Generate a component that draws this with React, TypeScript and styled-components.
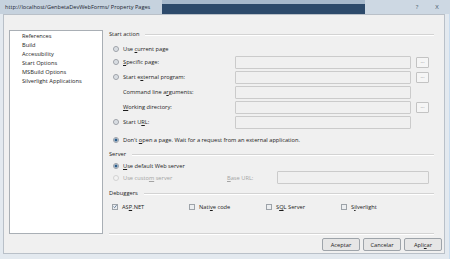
import React from "react";
import styled, { createGlobalStyle } from "styled-components";

const Global = createGlobalStyle`
  html, body { margin: 0; padding: 0; background: #ffffff; }
  body { font-family: "Open Sans", "Liberation Sans", sans-serif; }
  * { box-sizing: border-box; }
`;

const Window = styled.div`
  width: 450px;
  height: 259px;
  display: flex;
  flex-direction: column;
  background: #ffffff;
  overflow: hidden;
  font-family: "Open Sans", "Liberation Sans", sans-serif;
  font-size: 5.7px;
  color: #1c1c1c;
`;

const TitleBar = styled.div`
  height: 14px;
  flex: none;
  display: flex;
  background-color: #c9d4df;
`;

const TitleGlass = styled.div`
  width: 162px;
  flex: none;
  display: flex;
  align-items: center;
  padding: 0 0 1px 5px;
  background-color: #c6d2de;
`;

const TitleDark = styled.div`
  flex: 1;
  background-color: #2d4a6b;
  border-top: 4px solid #a7b9cc;
`;

const TitleCaptions = styled.div`
  width: 85px;
  flex: none;
  display: flex;
  align-items: center;
  justify-content: flex-end;
  padding: 0 6px 1px 0;
  background-color: #cdd8e3;
`;

const TitleText = styled.span`
  font-size: 5.6px;
  color: #1b2633;
  white-space: nowrap;
`;

const CaptionButton = styled.span`
  width: 14px;
  height: 9px;
  display: flex;
  align-items: center;
  justify-content: center;
  font-size: 6px;
  color: #46586b;
  margin-left: 6px;
`;

const Frame = styled.div`
  flex: 1;
  display: flex;
  padding: 0 4px 5px 3px;
  background: #e3e9ef;
  border-right: 1px solid #c9dcee;
`;

const Client = styled.div`
  flex: 1;
  display: flex;
  flex-direction: column;
  background: #f0f0f0;
  border: 1px solid #b9c0c8;
  padding: 15px 2px 2px 5px;
`;

const Body = styled.div`
  display: flex;
  height: 204px;
  margin-right: 8px;
`;

const ListBox = styled.div`
  width: 94px;
  flex: none;
  background: #ffffff;
  border: 1px solid #a9afb5;
  padding: 1px 0 0 12px;
  margin-right: 6px;
  display: flex;
  flex-direction: column;
`;

const ListItem = styled.div`
  height: 9.1px;
  line-height: 9.1px;
  white-space: nowrap;
  color: #1c1c1c;
`;

const Panel = styled.div`
  flex: 1;
  display: flex;
  flex-direction: column;
  border-bottom: 1px solid #d3d3d3;
  box-shadow: 0 1px 0 #ffffff;
`;

const GroupHeader = styled.div<{ $mt?: number }>`
  height: 8px;
  display: flex;
  align-items: center;
  margin-top: ${(p) => p.$mt ?? 0}px;
  &::after {
    content: "";
    flex: 1;
    height: 1px;
    margin-left: 6px;
    background: #d3d3d3;
    box-shadow: 0 1px 0 #ffffff;
  }
`;

const Row = styled.div<{ $h?: number; $mt?: number }>`
  display: flex;
  align-items: center;
  height: ${(p) => p.$h ?? 9}px;
  margin-top: ${(p) => p.$mt ?? 0}px;
`;

const OptionLabel = styled.div<{ $w?: number; $indent?: number; $disabled?: boolean }>`
  width: ${(p) => p.$w ?? 126}px;
  flex: none;
  display: flex;
  align-items: center;
  padding-left: ${(p) => p.$indent ?? 4}px;
  white-space: nowrap;
  color: ${(p) => (p.$disabled ? "#a3a3a3" : "#1c1c1c")};
`;

const Text = styled.span`
  white-space: pre;
`;

const Radio = styled.span<{ $checked?: boolean; $disabled?: boolean }>`
  width: 6px;
  height: 6px;
  border-radius: 50%;
  flex: none;
  margin-right: 4px;
  border: 1px solid ${(p) => (p.$disabled ? "#d2d2d2" : "#9a9fa6")};
  background: ${(p) =>
    p.$checked
      ? "radial-gradient(circle, #2b5d8a 0 1.3px, #9fb5cb 1.6px, #e9edf1 2.2px)"
      : p.$disabled
      ? "#f3f3f3"
      : "radial-gradient(circle, #d8dde2 0 1.2px, #f2f3f5 2.5px)"};
`;

const Check = styled.span`
  width: 6px;
  height: 6px;
  flex: none;
  margin-right: 4px;
  border: 1px solid #9da3a9;
  background: #eceef0;
  display: flex;
  align-items: center;
  justify-content: center;
`;

const TextBox = styled.div<{ $w?: number }>`
  width: ${(p) => p.$w ?? 176}px;
  height: 13px;
  flex: none;
  background: #f0f0f0;
  border: 1px solid #cbcbcb;
  border-radius: 1px;
`;

const Browse = styled.div`
  width: 13px;
  height: 11px;
  margin-left: 5px;
  flex: none;
  display: flex;
  align-items: center;
  justify-content: center;
  border: 1px solid #c3c3c3;
  border-radius: 1px;
  background: #f5f5f5;
  color: #7a7a7a;
  font-size: 5px;
  padding-bottom: 2px;
`;

const U = styled.span`
  text-decoration: underline;
`;

const CheckGrid = styled.div`
  display: grid;
  grid-template-columns: 77px 77px 75px 80px;
  padding-left: 3px;
  height: 9px;
  margin-top: 5px;
  align-items: center;
`;

const CheckItem = styled.div`
  display: flex;
  align-items: center;
  white-space: nowrap;
`;

const ButtonRow = styled.div`
  display: flex;
  justify-content: flex-end;
  gap: 3px;
  margin-top: 4px;
`;

const DialogButton = styled.div`
  width: 38px;
  height: 13px;
  display: flex;
  align-items: center;
  justify-content: center;
  border: 1px solid #9ea4aa;
  border-radius: 2px;
  background: #e6e6e6;
  color: #1c1c1c;
`;

const CheckMark = () => (
  <svg width="5" height="5" viewBox="0 0 5 5">
    <path d="M0.6 2.6 L2 4 L4.5 0.8" stroke="#3a5b80" strokeWidth="0.9" fill="none" />
  </svg>
);

export default function App() {
  const items = [
    "References",
    "Build",
    "Accessibility",
    "Start Options",
    "MSBuild Options",
    "Silverlight Applications",
  ];
  return (
    <>
      <Global />
      <Window>
        <TitleBar>
          <TitleGlass>
            <TitleText>http://localhost/GenbetaDevWebForms/ Property Pages</TitleText>
          </TitleGlass>
          <TitleDark />
          <TitleCaptions>
            <CaptionButton>?</CaptionButton>
            <CaptionButton>X</CaptionButton>
          </TitleCaptions>
        </TitleBar>
        <Frame>
          <Client>
            <Body>
              <ListBox>
                {items.map((t) => (
                  <ListItem key={t}>{t}</ListItem>
                ))}
              </ListBox>
              <Panel>
                <GroupHeader>Start action</GroupHeader>
                <Row $mt={6}>
                  <OptionLabel>
                    <Radio />
                    <Text>
                      Use <U>c</U>urrent page
                    </Text>
                  </OptionLabel>
                </Row>
                <Row $h={13} $mt={2.5}>
                  <OptionLabel>
                    <Radio />
                    <Text>
                      <U>S</U>pecific page:
                    </Text>
                  </OptionLabel>
                  <TextBox />
                  <Browse>...</Browse>
                </Row>
                <Row $h={13} $mt={2}>
                  <OptionLabel>
                    <Radio />
                    <Text>
                      Start e<U>x</U>ternal program:
                    </Text>
                  </OptionLabel>
                  <TextBox />
                  <Browse>...</Browse>
                </Row>
                <Row $h={13} $mt={2}>
                  <OptionLabel $indent={14}>
                    <Text>
                      Command line a<U>r</U>guments:
                    </Text>
                  </OptionLabel>
                  <TextBox />
                </Row>
                <Row $h={13} $mt={2}>
                  <OptionLabel $indent={14}>
                    <Text>
                      <U>W</U>orking directory:
                    </Text>
                  </OptionLabel>
                  <TextBox />
                  <Browse>...</Browse>
                </Row>
                <Row $h={13} $mt={2}>
                  <OptionLabel>
                    <Radio />
                    <Text>
                      Start U<U>R</U>L:
                    </Text>
                  </OptionLabel>
                  <TextBox />
                </Row>
                <Row $mt={6.5}>
                  <OptionLabel>
                    <Radio $checked />
                    <Text>
                      Don't <U>o</U>pen a page. Wait for a request from an external application.
                    </Text>
                  </OptionLabel>
                </Row>
                <GroupHeader $mt={6}>Server</GroupHeader>
                <Row $mt={3}>
                  <OptionLabel>
                    <Radio $checked />
                    <Text>
                      <U>U</U>se default Web server
                    </Text>
                  </OptionLabel>
                </Row>
                <Row $h={13} $mt={1}>
                  <OptionLabel $w={118} $disabled>
                    <Radio $disabled />
                    <Text>
                      Use custo<U>m</U> server
                    </Text>
                  </OptionLabel>
                  <OptionLabel $w={50} $indent={0} $disabled>
                    <Text>
                      <U>B</U>ase URL:
                    </Text>
                  </OptionLabel>
                  <TextBox $w={152} />
                </Row>
                <GroupHeader $mt={5}>Debuggers</GroupHeader>
                <CheckGrid>
                  <CheckItem>
                    <Check>
                      <CheckMark />
                    </Check>
                    <Text>
                      AS<U>P</U>.NET
                    </Text>
                  </CheckItem>
                  <CheckItem>
                    <Check />
                    <Text>
                      Nati<U>v</U>e code
                    </Text>
                  </CheckItem>
                  <CheckItem>
                    <Check />
                    <Text>
                      S<U>Q</U>L Server
                    </Text>
                  </CheckItem>
                  <CheckItem>
                    <Check />
                    <Text>
                      S<U>i</U>lverlight
                    </Text>
                  </CheckItem>
                </CheckGrid>
              </Panel>
            </Body>
            <ButtonRow>
              <DialogButton>Aceptar</DialogButton>
              <DialogButton>Cancelar</DialogButton>
              <DialogButton>
                <Text>
                  Apli<U>c</U>ar
                </Text>
              </DialogButton>
            </ButtonRow>
          </Client>
        </Frame>
      </Window>
    </>
  );
}
